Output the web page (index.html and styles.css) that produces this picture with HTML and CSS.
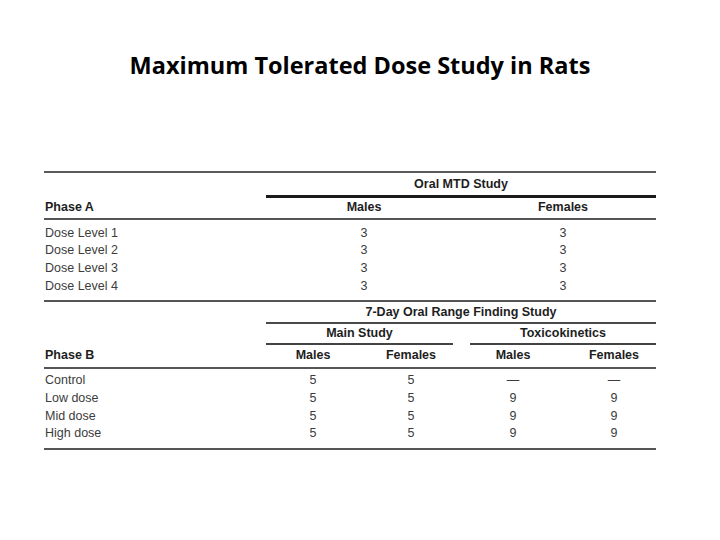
FILE: index.html
```html
<!DOCTYPE html>
<html>
<head>
<meta charset="utf-8">
<link rel="stylesheet" href="styles.css">
</head>
<body>
<h1 class="title">Maximum Tolerated Dose Study in Rats</h1>
<div class="table">
  <div class="row group-head">
    <div></div><div class="span4 rule-thick">Oral MTD Study</div>
  </div>
  <div class="row col-head col-head-a rule">
    <div class="label">Phase A</div><div class="span2">Males</div><div class="span2 shift">Females</div>
  </div>
  <div class="body rule">
    <div class="row"><div class="label">Dose Level 1</div><div class="span2">3</div><div class="span2 shift">3</div></div>
    <div class="row"><div class="label">Dose Level 2</div><div class="span2">3</div><div class="span2 shift">3</div></div>
    <div class="row"><div class="label">Dose Level 3</div><div class="span2">3</div><div class="span2 shift">3</div></div>
    <div class="row"><div class="label">Dose Level 4</div><div class="span2">3</div><div class="span2 shift">3</div></div>
  </div>
  <div class="row group-head">
    <div></div><div class="span4 rule-sub">7-Day Oral Range Finding Study</div>
  </div>
  <div class="row sub-head">
    <div></div><div class="span2 main">Main Study</div><div class="span2 tox">Toxicokinetics</div>
  </div>
  <div class="row col-head col-head-b rule">
    <div class="label">Phase B</div><div>Males</div><div>Females</div><div>Males</div><div class="shift">Females</div>
  </div>
  <div class="body body-b rule">
    <div class="row"><div class="label">Control</div><div>5</div><div>5</div><div>—</div><div class="shift">—</div></div>
    <div class="row"><div class="label">Low dose</div><div>5</div><div>5</div><div>9</div><div class="shift">9</div></div>
    <div class="row"><div class="label">Mid dose</div><div>5</div><div>5</div><div>9</div><div class="shift">9</div></div>
    <div class="row"><div class="label">High dose</div><div>5</div><div>5</div><div>9</div><div class="shift">9</div></div>
  </div>
</div>
</body>
</html>
```
FILE: styles.css
```css
html, body {
  margin: 0;
  padding: 0;
  background: #ffffff;
}

.title {
  margin: 0;
  padding-top: 49px;
  text-align: center;
  font-family: "Open Sans", "Lato", sans-serif;
  font-weight: 700;
  font-size: 23.5px;
  line-height: 32px;
  color: #000000;
}

.table {
  margin: 90px 0 0 44px;
  width: 612px;
  border-top: 2px solid #5a5a5a;
  font-family: "Liberation Sans", Arial, sans-serif;
  font-size: 12.5px;
  color: #3c3c3c;
}

.row {
  display: grid;
  grid-template-columns: 222px 94px 102px 102px 92px;
  text-align: center;
}

.label {
  text-align: left;
  padding-left: 1px;
}

.span2 {
  grid-column: span 2;
}

.span4 {
  grid-column: span 4;
}

.shift {
  padding-left: 8px;
}

.group-head {
  font-weight: 700;
  color: #1e1e1e;
}

.group-head > div {
  line-height: 22px;
}

.rule-thick {
  border-bottom: 3px solid #1a1a1a;
}

.rule-sub {
  line-height: 20px !important;
  border-bottom: 2px solid #4a4a4a;
}

.rule {
  border-bottom: 2px solid #555555;
}

.col-head {
  font-weight: 700;
  color: #1e1e1e;
  line-height: 20px;
}

.col-head-a {
  line-height: 18px;
  padding-bottom: 2px;
}

.col-head-b {
  line-height: 20px;
  padding-bottom: 2px;
}

.sub-head {
  font-weight: 700;
  color: #1e1e1e;
  line-height: 19px;
}

.main {
  margin-right: 9px;
  border-bottom: 2px solid #444444;
}

.tox {
  margin-left: 8px;
  border-bottom: 2px solid #444444;
}

.body {
  padding: 4.5px 0 4.5px;
}

.body-b {
  padding-top: 3.5px;
  padding-bottom: 4.5px;
}

.body .row {
  line-height: 17.7px;
}
```
